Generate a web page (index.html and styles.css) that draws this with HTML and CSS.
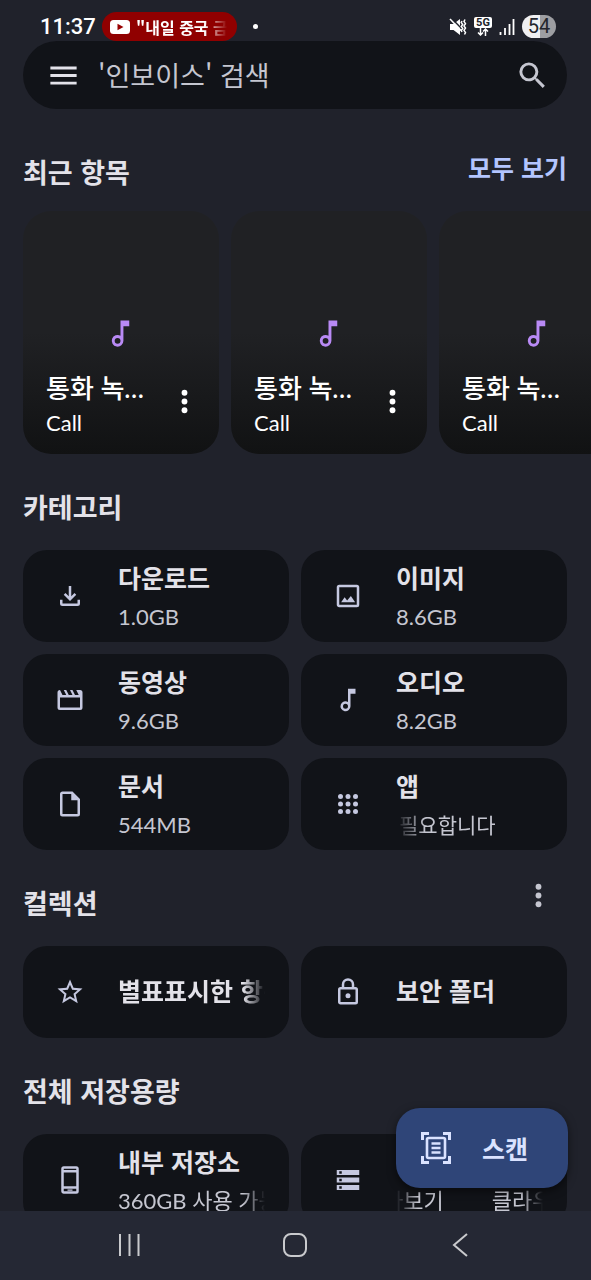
FILE: index.html
```html
<!DOCTYPE html>
<html lang="ko">
<head>
<meta charset="utf-8">
<meta name="viewport" content="width=device-width, initial-scale=1">
<title>Files</title>
<link rel="stylesheet" href="styles.css">
</head>
<body>
<svg class="defs" aria-hidden="true">
  <symbol id="note" viewBox="0 0 24 24"><path d="M12 3v10.550A4 4 0 1 0 14 17V7h4V3zm-2 16a2 2 0 1 1 0-4 2 2 0 0 1 0 4z"/></symbol>
  <symbol id="more" viewBox="0 0 24 24"><circle cx="12" cy="6" r="2"/><circle cx="12" cy="12" r="2"/><circle cx="12" cy="18" r="2"/></symbol>
</svg>
<div class="statusbar">
  <span class="clock">11:37</span>
  <span class="live">
    <svg class="yt" viewBox="0 0 20 14"><rect width="20" height="14" rx="3.5" fill="#fff"/><path d="M7.5 3.8v6.4L13.500 7z" fill="#900"/></svg>
    <span class="live-text">"내일 중국 금</span>
  </span>
  <span class="dot"></span>
  <span class="sys">
    <svg class="mute" viewBox="0 0 18 18"><path d="M1 6h3.500L11 1v16l-6.500-5H1z" fill="#fff"/><path d="M2.500 .5l14 14" stroke="#20232c" stroke-width="1.600"/><path d="M1 1l11 11.500" stroke="#fff" stroke-width="1.600"/><path d="M13 3l-.8 1.500 1.500 2-1.500 2 1.500 2-1.500 2 .8 1.500M16 1.500l-1 2 1.500 2.200-1.500 2.200 1.500 2.200-1.500 2.200 1.500 2.200-1 2" fill="none" stroke="#fff" stroke-width="1.500"/></svg>
    <span class="net"><span class="net-label">5G</span>
      <svg viewBox="0 0 12 8"><path d="M3.500 0v7M1 4.500l2.500 2.500L6 4.500M8.500 8V1M6 3.500L8.500 1 11 3.500" fill="none" stroke="#fff" stroke-width="1.500"/></svg></span>
    <svg class="signal" viewBox="0 0 16 16"><path d="M1.500 13v3M6 9v7M10.500 5v11M14.500 0v16" stroke="#fff" stroke-width="1.800"/></svg>
    <span class="battery">54</span>
  </span>
</div>

<main class="content">
  <form class="search">
    <button class="icon-btn" type="button" aria-label="메뉴"><svg class="icon-l" viewBox="0 0 24 24"><path d="M3 5.800h18v2H3zM3 11h18v2H3zM3 16.200h18v2H3z"/></svg></button>
    <input class="search-input" type="search" aria-label="검색" placeholder="'인보이스' 검색">
    <button class="icon-btn" type="button" aria-label="검색"><svg class="icon-l" viewBox="0 0 24 24"><path d="M15.500 14h-.79l-.28-.27A6.470 6.470 0 0 0 16 9.500 6.500 6.500 0 1 0 9.500 16c1.610 0 3.090-.59 4.230-1.570l.27.28v.79l5 4.990L20.490 19zm-6 0a4.500 4.500 0 1 1 0-9 4.500 4.500 0 0 1 0 9z"/></svg></button>
  </form>

  <header class="head head-recent"><h2>최근 항목</h2><a class="all" href="#">모두 보기</a></header>
  <section class="recents">
    <article class="recent"><svg class="recent-icon"><use href="#note"/></svg><div class="recent-foot"><div><div class="recent-title">통화 녹…</div><div class="recent-sub">Call</div></div><button class="icon-btn" aria-label="더보기"><svg class="icon-l"><use href="#more"/></svg></button></div></article>
    <article class="recent"><svg class="recent-icon"><use href="#note"/></svg><div class="recent-foot"><div><div class="recent-title">통화 녹…</div><div class="recent-sub">Call</div></div><button class="icon-btn" aria-label="더보기"><svg class="icon-l"><use href="#more"/></svg></button></div></article>
    <article class="recent"><svg class="recent-icon"><use href="#note"/></svg><div class="recent-foot"><div><div class="recent-title">통화 녹…</div><div class="recent-sub">Call</div></div><button class="icon-btn" aria-label="더보기"><svg class="icon-l"><use href="#more"/></svg></button></div></article>
  </section>

  <header class="head"><h2>카테고리</h2></header>
  <section class="grid">
    <a class="tile" href="#"><svg class="icon" viewBox="0 0 24 24"><path d="M11 4h2v8.200l2.600-2.600L17 11l-5 5-5-5 1.400-1.400 2.600 2.600zM4 15h2v3h12v-3h2v3a2 2 0 0 1-2 2H6a2 2 0 0 1-2-2z"/></svg><span class="label"><span class="name">다운로드</span><span class="size">1.0GB</span></span></a>
    <a class="tile" href="#"><svg class="icon" viewBox="0 0 24 24"><path d="M19 5v14H5V5zm0-2H5a2 2 0 0 0-2 2v14c0 1.100.9 2 2 2h14a2 2 0 0 0 2-2V5a2 2 0 0 0-2-2zM6.500 17l2.800-4 2 2.500 3-3.500 3.400 5z"/></svg><span class="label"><span class="name">이미지</span><span class="size">8.6GB</span></span></a>
    <a class="tile" href="#"><svg class="icon" viewBox="0 0 24 24"><path d="M4 4l2 4h3L7 4h2l2 4h3l-2-4h2l2 4h3l-2-4h3a2 2 0 0 1 2 2v12a2 2 0 0 1-2 2H4a2 2 0 0 1-2-2V6a2 2 0 0 1 2-2zm0 6v8h16v-8z"/></svg><span class="label"><span class="name">동영상</span><span class="size">9.6GB</span></span></a>
    <a class="tile" href="#"><svg class="icon"><use href="#note"/></svg><span class="label"><span class="name">오디오</span><span class="size">8.2GB</span></span></a>
    <a class="tile" href="#"><svg class="icon" viewBox="0 0 24 24"><path d="M6 2h8l6 6v12a2 2 0 0 1-2 2H6a2 2 0 0 1-2-2V4c0-1.100.9-2 2-2zm7 7V4H6v16h12V9z"/></svg><span class="label"><span class="name">문서</span><span class="size">544MB</span></span></a>
    <a class="tile" href="#"><svg class="icon" viewBox="0 0 24 24"><circle cx="6" cy="6" r="2"/><circle cx="12" cy="6" r="2"/><circle cx="18" cy="6" r="2"/><circle cx="6" cy="12" r="2"/><circle cx="12" cy="12" r="2"/><circle cx="18" cy="12" r="2"/><circle cx="6" cy="18" r="2"/><circle cx="12" cy="18" r="2"/><circle cx="18" cy="18" r="2"/></svg><span class="label"><span class="name">앱</span><span class="size size-ko scrolled-in">필요합니다</span></span></a>
  </section>

  <header class="head"><h2>컬렉션</h2><button class="icon-btn head-more" aria-label="더보기"><svg class="icon-l"><use href="#more"/></svg></button></header>
  <section class="grid">
    <a class="tile" href="#"><svg class="icon" viewBox="0 0 24 24"><path d="M22 9.240l-7.190-.62L12 2 9.190 8.630 2 9.240l5.460 4.730L5.820 21 12 17.270 18.180 21l-1.630-7.030zM12 15.400l-3.760 2.270 1-4.280-3.320-2.880 4.380-.38L12 6.100l1.710 4.040 4.380.38-3.320 2.880 1 4.280z"/></svg><span class="label single"><span class="name fade-end">별표표시한 항목</span></span></a>
    <a class="tile" href="#"><svg class="icon" viewBox="0 0 24 24"><path d="M18 8h-1V6A5 5 0 0 0 7 6v2H6a2 2 0 0 0-2 2v10c0 1.100.9 2 2 2h12a2 2 0 0 0 2-2V10a2 2 0 0 0-2-2zM9 6a3 3 0 0 1 6 0v2H9zm9 14H6V10h12zm-6-3a2 2 0 1 0 0-4 2 2 0 0 0 0 4z"/></svg><span class="label single"><span class="name">보안 폴더</span></span></a>
  </section>

  <header class="head"><h2>전체 저장용량</h2></header>
  <section class="grid">
    <a class="tile" href="#"><svg class="icon" viewBox="0 0 24 24"><path d="M17 1H7a2 2 0 0 0-2 2v18c0 1.100.9 2 2 2h10a2 2 0 0 0 2-2V3a2 2 0 0 0-2-2zm0 20H7v-2h10zm0-4H7V6h10zM17 4H7V3h10zM10 19.500h4v1h-4z"/></svg><span class="label"><span class="name">내부 저장소</span><span class="size fade-end">360GB 사용 가능</span></span></a>
    <a class="tile" href="#"><svg class="icon" viewBox="0 0 24 24"><path d="M3 20h18v-4H3zm2-3h2v2H5zM3 4v4h18V4zm4 3H5V5h2zm-4 7h18v-4H3zm2-3h2v2H5z"/></svg><span class="label"><span class="name"></span><span class="size marquee"><span class="marquee-out">아보기</span><span>클라우드</span></span></span></a>
  </section>

  <button class="fab" type="button"><svg class="scan" viewBox="0 0 30 32"><path d="M1.500 8V1.500H8M22 1.500h6.500V8M28.500 24v6.500H22M8 30.500H1.500V24" fill="none" stroke="currentColor" stroke-width="3"/><rect x="6" y="6" width="18" height="20" rx="1.500" fill="none" stroke="currentColor" stroke-width="2.600"/><path d="M10.500 11.500h9M10.500 16h9M10.500 20.500h9" stroke="currentColor" stroke-width="2.600"/></svg><span>스캔</span></button>
</main>

<nav class="navbar">
  <button class="nav-btn" aria-label="최근 앱"><svg viewBox="0 0 28 28"><path d="M4 3v22M13.500 3v22M22.500 3v22"/></svg></button>
  <button class="nav-btn" aria-label="홈"><svg viewBox="0 0 28 28"><rect x="3" y="3" width="22" height="22" rx="7"/></svg></button>
  <button class="nav-btn" aria-label="뒤로"><svg viewBox="0 0 28 28"><path d="M21 3L8 14l13 11"/></svg></button>
</nav>
</body>
</html>
```
FILE: styles.css
```css
* { box-sizing: border-box; }

body {
  margin: 0;
  height: 100vh;
  display: flex;
  flex-direction: column;
  overflow: hidden;
  background: #20222b;
  color: #e3e2e9;
  font-family: Lato, "Noto Sans CJK KR", sans-serif;
}

button { padding: 0; border: 0; background: none; color: inherit; font: inherit; }
a { color: inherit; text-decoration: none; }
.defs { position: absolute; width: 0; height: 0; }
.icon, .icon-l, .recent-icon { fill: currentColor; display: block; flex: none; }
.icon { width: 30px; height: 30px; color: #c5c8e0; }
.icon-l, .recent-icon { width: 35px; height: 35px; }
.icon-btn { display: block; flex: none; }

/* Status bar */
.statusbar {
  flex: none;
  display: flex;
  align-items: center;
  height: 41px;
  padding: 12px 35px 0 40px;
  color: #fff;
}
.clock { width: 62px; font: 500 22px/28px Roboto, sans-serif; }
.live {
  display: flex;
  align-items: center;
  gap: 6px;
  width: 135px;
  height: 29px;
  padding: 0 10px 0 8px;
  border-radius: 15px;
  background: #900000;
}
.yt { width: 20px; height: 14px; flex: none; }
.live-text {
  overflow: hidden;
  white-space: nowrap;
  font: 700 16px/26px "Noto Sans CJK KR", sans-serif;
  -webkit-mask-image: linear-gradient(90deg, #000 75%, transparent);
  mask-image: linear-gradient(90deg, #000 75%, transparent);
}
.dot { width: 5px; height: 5px; margin-left: 16px; border-radius: 50%; background: #fff; }
.sys { display: flex; align-items: center; gap: 7px; margin-left: auto; }
.mute { width: 18px; height: 18px; }
.net { display: flex; flex-direction: column; align-items: center; width: 18px; }
.net svg { width: 12px; height: 8px; }
.net-label {
  width: 18px;
  border-radius: 2px;
  background: #fff;
  color: #20222b;
  font: 700 11px/11px Roboto, sans-serif;
  text-align: center;
}
.signal { width: 16px; height: 16px; }
.battery {
  width: 34px;
  border-radius: 12px;
  background: linear-gradient(90deg, #f0f0f2 54%, #9d9ea2 54%);
  color: #23252d;
  font: 400 20px/23px Roboto, sans-serif;
  text-align: center;
}

/* Scrolling content */
.content { position: relative; flex: 1; min-height: 0; padding: 0 24px 0 23px; overflow: hidden; }

.search {
  display: flex;
  align-items: center;
  gap: 17px;
  height: 68px;
  padding: 0 17px 0 23px;
  border-radius: 34px;
  background: #111318;
  color: #e3e2e9;
}
.search-input {
  flex: 1;
  min-width: 0;
  padding: 0;
  border: 0;
  outline: 0;
  background: none;
  color: #e3e2e9;
  font: 400 27px/40px "Noto Sans CJK KR", sans-serif;
}
.search-input::placeholder { color: #c5c6d0; opacity: 1; }
.search .icon-btn:last-child { color: #c5c6d0; }

.head { display: flex; justify-content: space-between; padding: 32px 0 22px; }
.head h2 { margin: 0; font: 700 27px/42px "Noto Sans CJK KR", sans-serif; }
.head-recent { padding: 42px 0 18px; }
.all { color: #b3c5ff; font: 700 25px/32px "Noto Sans CJK KR", sans-serif; }
.head-more { width: 58px; height: 28px; color: #c5c6d0; }
.head-more .icon-l { margin: -4px auto 0; }

.recents { display: flex; gap: 12px; margin-right: -24px; overflow: hidden; }
.recent {
  flex: none;
  display: flex;
  flex-direction: column;
  justify-content: flex-end;
  width: 196px;
  height: 243px;
  padding: 0 17px 15px 23px;
  border-radius: 28px;
  background: linear-gradient(#202124 50%, #111213);
  color: #fff;
}
.recent-icon { margin: 0 auto 18px 57px; color: #b98af5; }
.recent-foot { display: flex; align-items: flex-start; justify-content: space-between; }
.recent-foot .icon-btn { padding-top: 15px; }
.recent-title { font: 500 26px/38px Lato, "Noto Sans CJK KR", sans-serif; }
.recent-sub { font-size: 22px; line-height: 32px; }

.grid { display: grid; grid-template-columns: 1fr 1fr; gap: 12px; }
.tile {
  display: flex;
  align-items: center;
  gap: 33px;
  min-width: 0;
  height: 92px;
  padding: 0 24px 0 32px;
  border-radius: 24px;
  background: #111318;
}
.label { flex: 1; min-width: 0; display: flex; flex-direction: column; padding-top: 4px; }
.single { padding: 0 0 4px; }
.name, .size { overflow: hidden; white-space: nowrap; }
.name { height: 38px; font: 700 25px/38px "Noto Sans CJK KR", sans-serif; }
.size { height: 42px; font-size: 22px; line-height: 42px; color: #c5c6d0; }
.size-ko { font-size: 21px; }
.fade-end {
  -webkit-mask-image: linear-gradient(90deg, #000 85%, transparent);
  mask-image: linear-gradient(90deg, #000 85%, transparent);
}
.scrolled-in {
  padding-left: 3px;
  -webkit-mask-image: linear-gradient(90deg, transparent, #000 20%);
  mask-image: linear-gradient(90deg, transparent, #000 20%);
}
.marquee {
  display: flex;
  gap: 48px;
  -webkit-mask-image: linear-gradient(90deg, transparent, #000 15%, #000 85%, transparent);
  mask-image: linear-gradient(90deg, transparent, #000 15%, #000 85%, transparent);
}
.marquee-out { margin-left: -13px; }

.fab {
  position: absolute;
  right: 23px;
  bottom: 23px;
  display: flex;
  align-items: center;
  gap: 31px;
  height: 80px;
  padding: 0 40px 0 25px;
  border-radius: 24px;
  background: #2f4578;
  color: #dae2ff;
  box-shadow: 0 3px 8px rgba(0, 0, 0, .5);
  font: 700 25px/38px "Noto Sans CJK KR", sans-serif;
}
.scan { width: 30px; height: 32px; }

/* System navigation */
.navbar {
  flex: none;
  display: flex;
  justify-content: space-around;
  align-items: center;
  height: 69px;
  padding: 0 49px 2px 47px;
  background: #252834;
}
.nav-btn { flex: 1; }
.nav-btn svg { display: block; width: 28px; height: 28px; margin: 0 auto; fill: none; stroke: #c9cacd; stroke-width: 2; }
```
